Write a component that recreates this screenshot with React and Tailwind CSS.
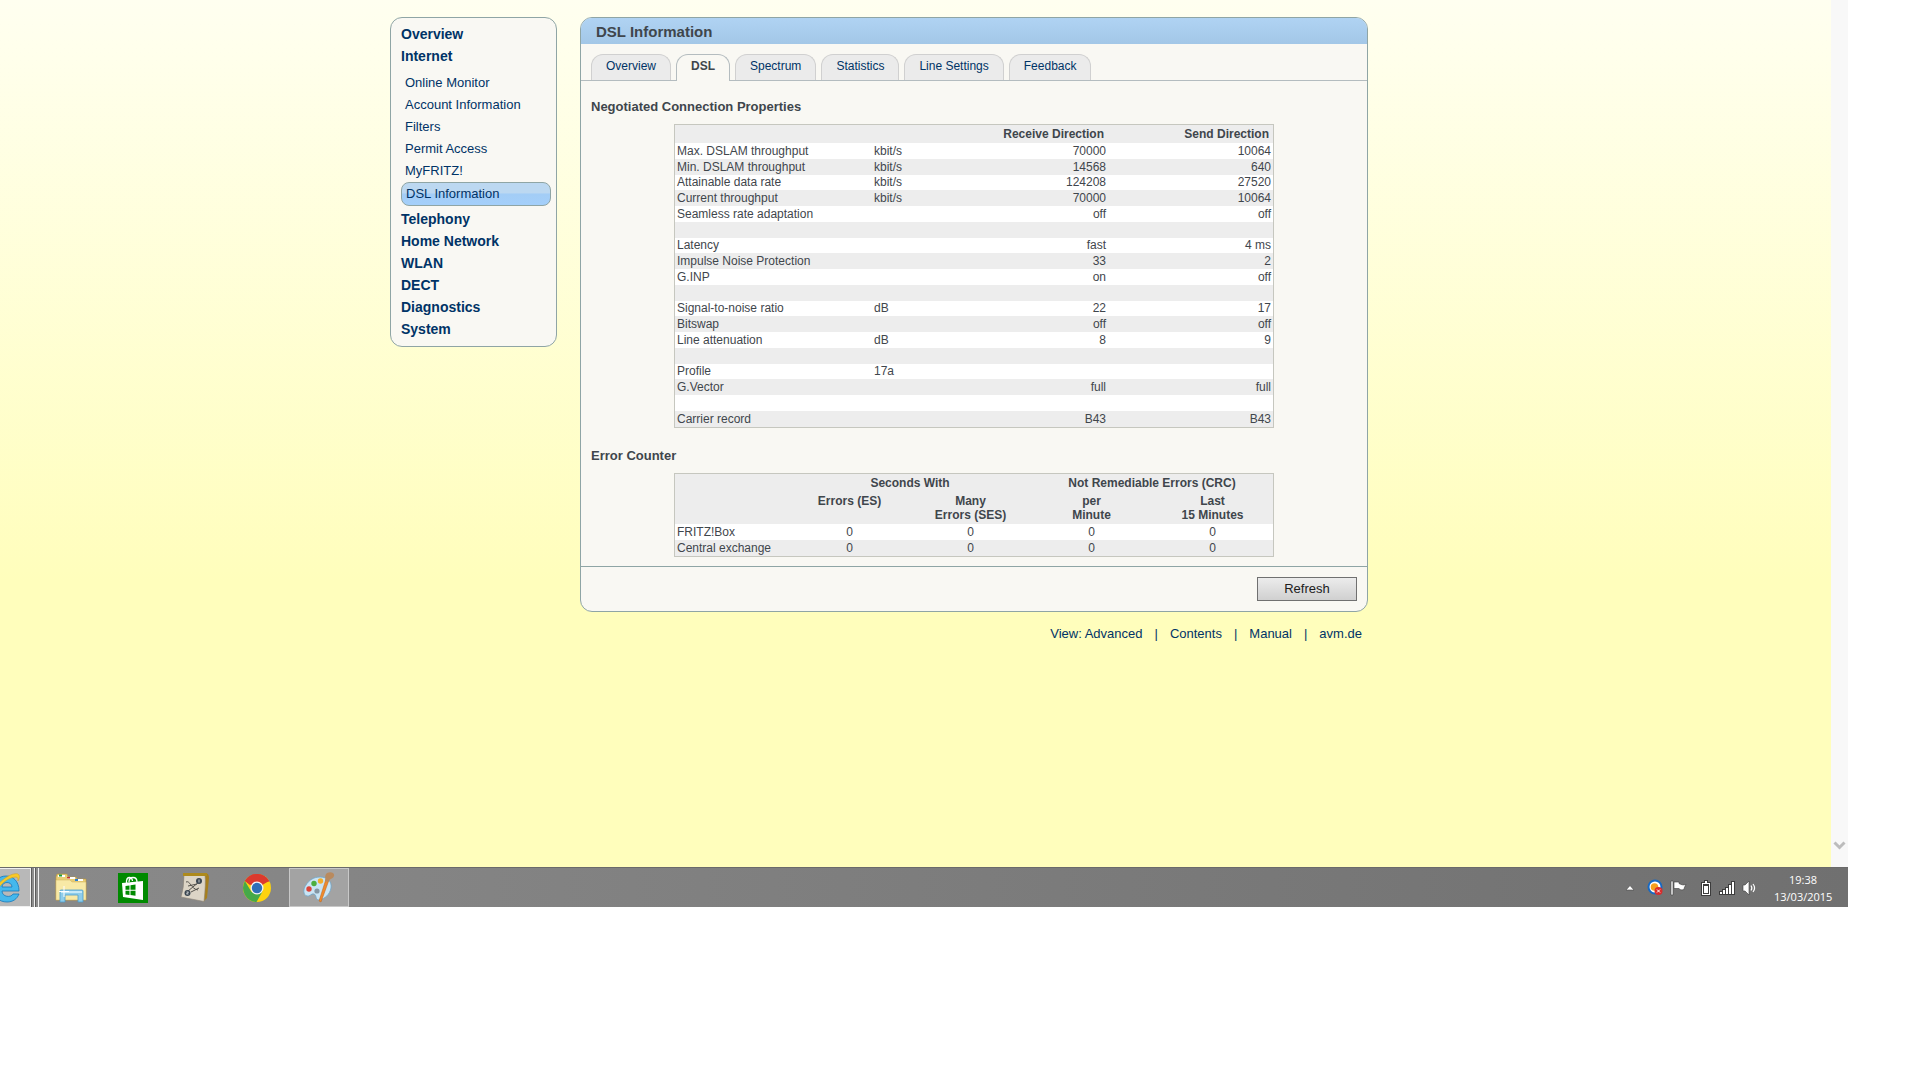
import React from "react";

const subItems = [
  "Online Monitor",
  "Account Information",
  "Filters",
  "Permit Access",
  "MyFRITZ!",
];

const bottomItems = [
  "Telephony",
  "Home Network",
  "WLAN",
  "DECT",
  "Diagnostics",
  "System",
];

const tabs = ["Overview", "DSL", "Spectrum", "Statistics", "Line Settings", "Feedback"];

const connectionRows = [
  ["Max. DSLAM throughput", "kbit/s", "70000", "10064"],
  ["Min. DSLAM throughput", "kbit/s", "14568", "640"],
  ["Attainable data rate", "kbit/s", "124208", "27520"],
  ["Current throughput", "kbit/s", "70000", "10064"],
  ["Seamless rate adaptation", "", "off", "off"],
  ["", "", "", ""],
  ["Latency", "", "fast", "4 ms"],
  ["Impulse Noise Protection", "", "33", "2"],
  ["G.INP", "", "on", "off"],
  ["", "", "", ""],
  ["Signal-to-noise ratio", "dB", "22", "17"],
  ["Bitswap", "", "off", "off"],
  ["Line attenuation", "dB", "8", "9"],
  ["", "", "", ""],
  ["Profile", "17a", "", ""],
  ["G.Vector", "", "full", "full"],
  ["", "", "", ""],
  ["Carrier record", "", "B43", "B43"],
];

const errorRows = [
  ["FRITZ!Box", "0", "0", "0", "0"],
  ["Central exchange", "0", "0", "0", "0"],
];

const footerLinks = ["View: Advanced", "Contents", "Manual", "avm.de"];

const Sidebar = () => {
  return (
    <nav className="w-[167px] shrink-0 rounded-xl border border-[#8fa5a5] bg-[#f9f8f3] pt-[5px] pb-1.5 px-2 text-[#003366]">
      <ul className="text-sm font-bold leading-[22px]">
        <li className="px-0.5"><a href="#overview">Overview</a></li>
        <li className="px-0.5"><a href="#internet">Internet</a></li>
      </ul>
      <ul className="pt-[5px] pl-1.5 text-[13px] leading-[22px]">
        {subItems.map((item) => (
          <li key={item}><a href="#sub">{item}</a></li>
        ))}
      </ul>
      <a
        href="#dsl"
        aria-current="page"
        className="block mx-0.5 w-[150px] h-6 rounded-lg border border-[#8fa5a5] bg-linear-to-b from-[#bcd8f1] from-45% via-[#a3cdf6] via-50% to-[#a4cffa] pl-1 text-[13px] leading-[22px]"
      >
        DSL Information
      </a>
      <ul className="pt-0.5 text-sm font-bold leading-[22px]">
        {bottomItems.map((item) => (
          <li key={item} className="px-0.5"><a href="#main">{item}</a></li>
        ))}
      </ul>
    </nav>
  );
};

const Tabs = () => {
  return (
    <div role="tablist" className="flex items-end gap-[5px] border-b border-[#b4bcbf] pt-2.5 pl-2.5">
      {tabs.map((tab) => (
        <button
          key={tab}
          type="button"
          role="tab"
          aria-selected={tab === "DSL"}
          className={
            tab === "DSL"
              ? "h-[27px] -mb-px rounded-t-xl border border-b-0 border-[#b4bcbf] bg-[#f9f8f3] px-3.5 pb-[5px] text-xs font-bold"
              : "h-[26px] rounded-t-xl border border-b-0 border-[#d0d0d0] bg-[#ebebeb] px-3.5 pb-1 text-xs text-[#003366]"
          }
        >
          {tab}
        </button>
      ))}
    </div>
  );
};

const ConnectionTable = () => {
  return (
    <table className="mx-auto h-[304px] w-[600px] table-fixed border-separate border-spacing-0 border border-[#c6c7bf] bg-white text-xs leading-[15px]">
      <colgroup>
        <col className="w-[197px]" />
        <col className="w-[71px]" />
        <col className="w-[165px]" />
        <col className="w-[165px]" />
      </colgroup>
      <thead>
        <tr className="h-[18px] bg-[#ededed]">
          <th className="p-0"></th>
          <th className="p-0"></th>
          <th className="py-0 pl-0 pr-1 text-right">Receive Direction</th>
          <th className="py-0 pl-0 pr-1 text-right">Send Direction</th>
        </tr>
      </thead>
      <tbody className="align-bottom">
        {connectionRows.map((row, i) => (
          <tr key={i} className="odd:bg-white even:bg-[#ededed]">
            <td className="py-0 px-0.5">{row[0] || "\u00a0"}</td>
            <td className="py-0 px-0.5">{row[1]}</td>
            <td className="py-0 px-0.5 text-right">{row[2]}</td>
            <td className="py-0 px-0.5 text-right">{row[3]}</td>
          </tr>
        ))}
      </tbody>
    </table>
  );
};

const ErrorTable = () => {
  return (
    <table className="mx-auto w-[600px] table-fixed border-separate border-spacing-0 border border-[#c6c7bf] bg-white text-xs leading-[14px]">
      <colgroup>
        <col className="w-[114px]" />
        <col span={4} className="w-[121px]" />
      </colgroup>
      <thead className="bg-[#ededed] align-top">
        <tr>
          <th className="p-0"></th>
          <th colSpan={2} className="p-0 pt-0.5 pb-0.5">Seconds With</th>
          <th colSpan={2} className="p-0 pt-0.5 pb-0.5">Not Remediable Errors (CRC)</th>
        </tr>
        <tr>
          <th className="p-0"></th>
          <th className="p-0 pt-0.5 pb-0.5">Errors (ES)</th>
          <th className="p-0 pt-0.5 pb-0.5">Many<br />Errors (SES)</th>
          <th className="p-0 pt-0.5 pb-0.5">per<br />Minute</th>
          <th className="p-0 pt-0.5 pb-0.5">Last<br />15 Minutes</th>
        </tr>
      </thead>
      <tbody className="leading-4">
        {errorRows.map((row) => (
          <tr key={row[0]} className="text-center odd:bg-white even:bg-[#ededed]">
            <td className="py-0 px-0.5 text-left">{row[0]}</td>
            {row.slice(1).map((value, i) => (
              <td key={i} className="p-0">{value}</td>
            ))}
          </tr>
        ))}
      </tbody>
    </table>
  );
};

const ExplorerIcon = () => (
  <svg width="32" height="30" viewBox="0 0 32 30">
    <path d="M2 1h10l1 3h8l1 2h9v21H1V4z" fill="#e9cd74" stroke="#b8963c" strokeWidth=".6" />
    <rect x="3" y="2" width="7" height="2" fill="#fff" />
    <rect x="4" y="1.500" width="3" height="2" fill="#1d9a3c" />
    <rect x="12" y="4" width="8" height="2" fill="#fff" />
    <rect x="12" y="4" width="3" height="1.500" fill="#c8362b" />
    <rect x="20" y="6" width="8" height="2" fill="#fff" />
    <rect x="20" y="6" width="3" height="2" fill="#2b7fd0" />
    <path d="M1 7h14l2 2h14v18H1z" fill="#f8e9a6" stroke="#d0b25c" strokeWidth=".5" />
    <path d="M5 29V18q0-1 1-1h21q1 0 1 1v11h-5v-7H10v7z" fill="#8fcdea" stroke="#4b9ccb" strokeWidth=".8" />
    <path d="M6 19h21" stroke="#d9f2fc" strokeWidth="1.500" />
    <path d="M9 13v11M4 18.500h10" stroke="#fff" strokeWidth="1" />
  </svg>
);

const StoreIcon = () => (
  <svg width="30" height="30" viewBox="0 0 30 30">
    <rect width="30" height="30" fill="#008a00" />
    <path d="M8.500 10C8 3 14 3 14.500 8M11 9c0-6 8-6 8 0" fill="none" stroke="#fff" strokeWidth="1.300" />
    <path d="M4 10l21-2v19L5 24z" fill="#fff" />
    <path d="M7.500 13l4-.5v4.200h-4zM12.500 12.300l5-.7v5.100h-5zM7.500 17.700h4V22l-4-.5zM12.500 17.700h5v5l-5-.6z" fill="#008a00" />
  </svg>
);

const PlaybookIcon = () => (
  <svg width="31" height="31" viewBox="0 0 31 31">
    <path d="M25 1q4 0 4 5l-2 20-4 4z" fill="#a67f1c" />
    <path d="M4 3h21q1 8-1 26.500L1 25Q4 16 4 3z" fill="#dcd5c6" stroke="#8d8577" strokeWidth=".6" />
    <path d="M3 1h24v3H3z" fill="#ad8a1d" />
    <path d="M6 10c4-2 5 7 12 8M19 10L8 19M8 14l9-2M11 20l8-4" fill="none" stroke="#55534d" />
    <circle cx="19" cy="9" r="3" fill="#3a4650" />
    <circle cx="7.500" cy="21" r="3" fill="#3a4650" />
    <path d="M19 7.500v3M6.500 20h2l-2 2h2" stroke="#fff" strokeWidth=".7" fill="none" />
  </svg>
);

const ChromeIcon = () => (
  <svg width="28" height="28" viewBox="0 0 28 28">
    <circle cx="14" cy="14" r="14" fill="#fdd20e" />
    <path d="M14 14L1.900 7A14 14 0 0 1 26.100 7z" fill="#dc3a2e" />
    <path d="M14 7.500h12.400A14 14 0 0 0 1.900 7l5 4z" fill="#dc3a2e" />
    <path d="M1.900 7A14 14 0 0 0 13.500 28l6-10.500L8.500 18z" fill="#45a948" />
    <circle cx="14" cy="14" r="6.500" fill="#f4f4f4" />
    <circle cx="14" cy="14" r="5.200" fill="#2f6fb8" />
  </svg>
);

const PaintIcon = () => (
  <svg width="32" height="31" viewBox="0 0 32 31">
    <path d="M17 5c8 0 12 5 11 11s-6 11-12 12c-4 0-2-5-5-6s-4 3-7 2c-4-1-4-7-1-11 3-5 8-8 14-8z" fill="#c9e4f4" stroke="#6ea7cc" strokeWidth=".8" />
    <circle cx="6" cy="17" r="2.700" fill="#dd4439" />
    <circle cx="11" cy="11.500" r="2.700" fill="#4cae3e" />
    <circle cx="17.500" cy="9" r="2.700" fill="#f2ae2c" />
    <circle cx="14" cy="19" r="2.600" fill="#8496a3" />
    <path d="M26 8l-8 22-2-1 7-22z" fill="#ef8a2d" stroke="#b86218" strokeWidth=".5" />
    <path d="M24 1c4-2 8 0 7 3s-4 2-6 6l-3-1c1-3-1-5 2-8z" fill="#b98a5e" />
  </svg>
);

const InternetExplorerIcon = () => (
  <svg width="22" height="32" viewBox="0 0 22 32">
    <path d="M-6 17C-6 9-1 4 6 4s13 5 13 15H2c0 6 9 7 11 3h6c-2 5-6 8-12 8-8 0-13-5-13-13zM2 15h10c0-6-10-6-10 0z" fill="#45b8ec" stroke="#1379bd" strokeWidth=".8" />
    <path d="M-4 15C4 4 17-1 19 3c1 2 0 4-1 6 0-2 0-4-2-4C11 5 3 9-2 17z" fill="#f8c928" stroke="#d39e12" strokeWidth=".5" />
  </svg>
);

const Tray = () => (
  <div className="flex items-center">
    <svg className="mr-3" width="10" height="6" viewBox="0 0 10 6">
      <path d="M5 .5L9 5H1z" fill="#fff" stroke="#4a4a4a" strokeWidth=".6" />
    </svg>
    <svg className="mr-[7px]" width="16" height="17" viewBox="0 0 16 17">
      <circle cx="8" cy="8" r="6.500" fill="#fff" stroke="#1769c4" strokeWidth="2" />
      <circle cx="7.500" cy="8" r="3.800" fill="#f6a01e" />
      <circle cx="11.500" cy="12" r="4" fill="#d92c2c" />
      <path d="M10 10.500l3 3M13 10.500l-3 3" stroke="#fff" />
    </svg>
    <svg className="mr-3.5" width="17" height="16" viewBox="0 0 17 16">
      <path d="M1 1h2v14H1z" fill="#fff" stroke="#3c3c3c" strokeWidth=".6" />
      <path d="M4 2h5v1.500c2 1 4 2 7 1-1 2-2 3-2 5-3 1-4 0-5-1H4z" fill="#fff" stroke="#3c3c3c" strokeWidth=".6" />
    </svg>
    <svg className="mr-2" width="10" height="16" viewBox="0 0 10 16">
      <path d="M3 0h4v2h3v14H0V2h3z" fill="#3c3c3c" />
      <path d="M4 1h2v2h3v12H1V3h3z" fill="#fff" />
      <path d="M2 4h6v10H2z" fill="#3c3c3c" />
      <path d="M3 6h4v7H3z" fill="#fff" />
    </svg>
    <svg className="mr-[7px]" width="16" height="14" viewBox="0 0 16 14">
      <path d="M0 10h3V8h3V6h3V3h3V0h4v14H0z" fill="#3c3c3c" />
      <path d="M1 11h2v2H1zM4 9h2v4H4zM7 7h2v6H7zM10 4h2v9h-2zM13 1h2v12h-2z" fill="#fff" />
    </svg>
    <svg width="16" height="16" viewBox="0 0 16 16">
      <path d="M1 5h2l4-4v14l-4-4H1z" fill="#fff" stroke="#3c3c3c" strokeWidth=".6" />
      <path d="M9 5.500c1 1.500 1 3.500 0 5M11 4c2 2.500 2 5.500 0 8" fill="none" stroke="#fff" strokeWidth="1.200" />
    </svg>
  </div>
);

const Taskbar = () => {
  return (
    <footer className="flex h-10 items-stretch justify-between border-t border-[#6a6a6a] bg-linear-to-r from-[#8a8a8a] to-[#707070]">
      <div className="flex items-center">
        <div className="flex h-full items-stretch">
          <button type="button" aria-label="Internet Explorer" className="w-[31px] border border-l-0 border-[#f0f0f0] bg-[#b8b8b8]">
            <InternetExplorerIcon />
          </button>
          <div className="w-1 border-l border-l-[#5a5a5a] border-r border-r-[#f0f0f0] bg-[#8c8c8c]"></div>
          <div className="w-1 border-l border-l-[#5a5a5a] border-r border-r-[#f0f0f0] bg-[#8c8c8c]"></div>
        </div>
        <button type="button" aria-label="File Explorer" className="ml-4"><ExplorerIcon /></button>
        <button type="button" aria-label="Store" className="ml-[31px]"><StoreIcon /></button>
        <button type="button" aria-label="Playbook" className="ml-8"><PlaybookIcon /></button>
        <button type="button" aria-label="Chrome" className="ml-8"><ChromeIcon /></button>
        <button type="button" aria-label="Paint" className="ml-[18px] flex h-[39px] w-[60px] items-center justify-center border border-[#c8c8c8] bg-[#a3a3a3]">
          <PaintIcon />
        </button>
      </div>
      <div className="flex items-center gap-4 pr-4 text-white">
        <Tray />
        <time className="w-[58px] text-center font-['Open_Sans',sans-serif] text-[11px] leading-[17px]">
          19:38<br />13/03/2015
        </time>
      </div>
    </footer>
  );
};

const App = () => {
  return (
    <div className="min-h-screen bg-white pr-[72px] font-['Liberation_Sans',Arial,sans-serif] text-[#3f464c]">
      <div className="flex min-h-[867px]">
        <div className="flex-1 bg-linear-to-b from-[#fffff0] to-[#fffebc] to-[580px] pt-[17px] pl-[390px]">
          <div className="flex items-start gap-[23px]">
            <Sidebar />
            <div className="w-[788px]">
              <main className="overflow-hidden rounded-xl border border-[#8fa5a5] bg-[#f9f8f3]">
                <h1 className="h-[26px] bg-linear-to-b from-[#b0d3f3] to-[#a3c7e7] pt-px pl-[15px] text-[15px] font-bold leading-[26px]">
                  DSL Information
                </h1>
                <Tabs />
                <section className="px-2.5">
                  <h2 className="pt-4 pb-[7px] text-[13px] font-bold leading-5">Negotiated Connection Properties</h2>
                  <ConnectionTable />
                  <h2 className="pt-[18px] pb-[7px] text-[13px] font-bold leading-5">Error Counter</h2>
                  <ErrorTable />
                </section>
                <div className="mt-[9px] flex justify-end border-t border-[#8fa5a5] p-2.5">
                  <button type="button" className="h-6 w-[100px] border border-[#707070] bg-linear-to-b from-[#ececec] to-[#d0d0d0] text-[13px] text-[#202020]">
                    Refresh
                  </button>
                </div>
              </main>
              <div className="flex justify-end gap-3 pt-3 pr-1.5 text-[13px] leading-5 text-[#003366]">
                {footerLinks.map((link, i) => (
                  <React.Fragment key={link}>
                    {i > 0 && <span>|</span>}
                    <a href="#footer">{link}</a>
                  </React.Fragment>
                ))}
              </div>
            </div>
          </div>
        </div>
        <div className="flex w-[17px] flex-col justify-end bg-[#f8f8f8] pb-4">
          <svg className="mx-auto" width="13" height="10" viewBox="0 0 13 10">
            <path d="M1.500 1.500l5 5 5-5" fill="none" stroke="#bcbcbc" strokeWidth="3" />
          </svg>
        </div>
      </div>
      <Taskbar />
    </div>
  );
};

export default App;
